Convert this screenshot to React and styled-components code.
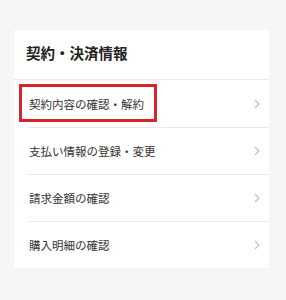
import React from "react";
import styled, { createGlobalStyle } from "styled-components";

const Global = createGlobalStyle`
  html, body { margin: 0; padding: 0; background: #f5f6f8; }
  body { font-family: "Noto Sans CJK JP", "Noto Sans", sans-serif; }
`;

const Page = styled.div`
  width: 286px;
  height: 300px;
  box-sizing: border-box;
  padding: 30px 17px 0 14px;
`;

const Card = styled.section`
  background: #fff;
  box-shadow: 0 0 1px rgba(0,0,0,0.04);
`;

const Header = styled.h2`
  margin: 0;
  height: 50px;
  box-sizing: border-box;
  padding: 0 0 4px 12px;
  display: flex;
  align-items: center;
  font-size: 14.5px;
  font-weight: 700;
  color: #222;
  border-bottom: 1px solid #e6e7e9;
`;

const List = styled.ul`
  list-style: none;
  margin: 0;
  padding: 0 0 0 14px;
`;

const Row = styled.li`
  position: relative;
  height: ${p => p.$h}px;
  display: flex;
  align-items: center;
  justify-content: space-between;
  padding: 0 9px 0 1px;
  font-size: 11.5px;
  color: #333;
  border-bottom: ${p => (p.$last ? "none" : "1px solid #e8e9eb")};
`;

const Highlight = styled.span`
  position: absolute;
  left: -9px;
  top: 4px;
  width: 138px;
  height: 38px;
  box-sizing: border-box;
  border: 3px solid #d8232a;
  pointer-events: none;
`;

const Chevron = () => (
  <svg width="6" height="10" viewBox="0 0 6 10" fill="none">
    <path d="M1 1l4 4-4 4" stroke="#bdbec1" strokeWidth="1.1" />
  </svg>
);

const items = [
  { label: "契約内容の確認・解約", h: 47, mark: true },
  { label: "支払い情報の登録・変更", h: 46 },
  { label: "請求金額の確認", h: 46 },
  { label: "購入明細の確認", h: 46, last: true },
];

export default function App() {
  return (
    <>
      <Global />
      <Page>
        <Card>
          <Header>契約・決済情報</Header>
          <List>
            {items.map(it => (
              <Row key={it.label} $h={it.h} $last={it.last}>
                {it.mark && <Highlight />}
                <span>{it.label}</span>
                <Chevron />
              </Row>
            ))}
          </List>
        </Card>
      </Page>
    </>
  );
}
